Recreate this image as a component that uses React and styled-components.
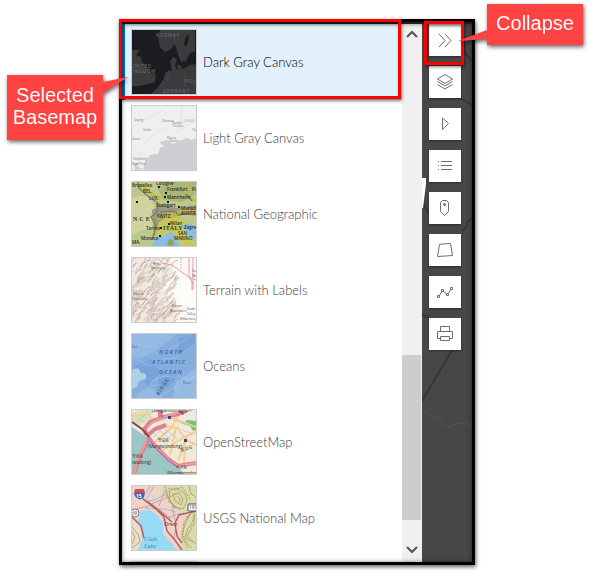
import * as React from 'react';
import styled, {createGlobalStyle} from 'styled-components';


const GlobalStyles = createGlobalStyle`
  *, *::before, *::after {
    box-sizing: border-box;
  }

  body {
    margin: 0;
    background-color: #fff;
    font-family: Lato, "Noto Sans CJK KR", sans-serif;
  }
`;

const Stage = styled.main`
  position: relative;
  height: 100vh;
  padding: 19px 114px 9px 119px;
  overflow: hidden;
`;

const Viewer = styled.section`
  position: relative;
  display: flex;
  height: 100%;
  border: 3px solid #000;
  box-shadow: 1px 2px 4px rgba(0, 0, 0, 0.6);

  &::after {
    content: '';
    position: absolute;
    inset: 0;
    border-top: 2px solid #202020;
    box-shadow: inset 0 0 4px rgba(0, 0, 0, 0.5);
    pointer-events: none;
  }
`;

const BasemapList = styled.ul`
  flex: 1;
  min-width: 0;
  margin: 0;
  padding: 2px 0 0;
  overflow: hidden;
  list-style: none;
`;

const BasemapButton = styled.button`
  display: flex;
  align-items: center;
  gap: 6px;
  width: 100%;
  height: 76px;
  padding: 0 6px;
  border: none;
  border-left: 3px solid ${({$selected}) => ($selected ? '#0079c1' : 'transparent')};
  background-color: ${({$selected}) => ($selected ? '#e2f1fb' : '#fff')};
  color: ${({$selected}) => ($selected ? '#000' : '#404040')};
  font-family: inherit;
  font-size: 13px;
  font-weight: 300;
  text-align: left;
  cursor: pointer;
`;

const Thumbnail = styled.svg`
  flex: none;
  width: 66px;
  height: 66px;
  border: 1px solid #ccc;
  font-family: "Open Sans", "Noto Sans CJK KR", sans-serif;
  font-weight: 400;
`;

const Scrollbar = styled.div`
  display: flex;
  flex-direction: column;
  width: 20px;
  padding-right: 1px;
  background-color: #f0f0f0;
`;

const ScrollButton = styled.button`
  display: grid;
  place-items: center;
  height: 24px;
  padding: 0;
  border: none;
  background: none;
`;

const ScrollTrack = styled.div`
  display: flex;
  flex: 1;
  flex-direction: column;
`;

const ScrollSpace = styled.div`
  flex: ${({$size}) => $size};
`;

const ScrollThumb = styled.div`
  flex: 165;
  background-color: #cdcdcd;
`;

const Toolbar = styled.nav`
  position: relative;
  display: flex;
  flex-direction: column;
  gap: 10px;
  width: 50px;
  padding: 2px 7px;
  background-color: #474749;
`;

const Roads = styled.svg`
  position: absolute;
  top: 0;
  left: 0;
  width: 50px;
  height: 540px;
`;

const ToolButton = styled.button`
  position: relative;
  width: 32px;
  height: 32px;
  padding: 0;
  border: none;
  background-color: #fff;
  box-shadow: 0 1px 2px rgba(0, 0, 0, 0.4);
  cursor: pointer;

  svg {
    display: block;
    fill: none;
    stroke: #6e6e6e;
  }
`;

const Highlight = styled.div`
  position: absolute;
  z-index: 1;
  border: 3px solid #f00;
  box-shadow: 1px 2px 3px rgba(0, 0, 0, 0.5), inset 1px 2px 3px rgba(0, 0, 0, 0.4);
  pointer-events: none;
`;

const RowHighlight = styled(Highlight)`
  top: -3px;
  right: 71px;
  left: -3px;
  height: 80px;
`;

const ButtonHighlight = styled(Highlight)`
  top: -1px;
  right: 8px;
  width: 40px;
  height: 44px;
`;

const Callout = styled.div`
  position: absolute;
  z-index: 2;
  width: 96px;
  color: #fff;
  background-color: #ff4242;
  font-family: "Liberation Sans", Arial, sans-serif;
  font-size: 20px;
  line-height: 22px;
  text-align: center;
  filter: drop-shadow(1px 2px 2px rgba(0, 0, 0, 0.6));
`;

const BasemapCallout = styled(Callout)`
  top: 75px;
  left: 7px;
  padding: 9px 0 12px;
`;

const CollapseCallout = styled(Callout)`
  top: 4px;
  right: 6px;
  padding: 8px 0 11px;
`;

const BasemapPointer = styled.svg`
  position: absolute;
  top: 0;
  left: 95px;
  width: 28px;
  height: 24px;
`;

const CollapsePointer = styled.svg`
  position: absolute;
  top: 24px;
  right: 95px;
  width: 30px;
  height: 16px;
`;


const DarkGrayMap = () => (
    <>
        <path fill="#1c1c20" d="M0 0h64v64H0z"/>
        <g fill="#3b3b3d">
            <path d="M28 0 26 7l2 10 5 5 6-3 4-5 3 10 3 8 5-1 4-8 5-2V0z"/>
            <path d="M0 20h8l-4 5 5 2 1 5 7 7 2 4 5 1-1 8-6 2-10 2H0z"/>
            <path d="M19 64l7-7 5-7 3-8 6-2-2-8 3-5 4 2-2 6 2 5 8-2 7-4 4 1v29z"/>
            <path d="M45 35h4l1 4-4 1z"/>
        </g>
        <path fill="#1c1c20" d="M53 9l3-5 1 6-3 7-2-2zM0 59l13-2 1 2-9 5H0z"/>
        <path fill="none" stroke="#505053" strokeWidth=".6" d="M42 3l1 12M37 40l-2 12-7 4M52 43l1 13 7 5"/>
        <g fill="#77777a" fontSize="4.5" letterSpacing=".8">
            <text x="24" y="7">NORWAY</text>
            <text x="-1" y="38">UNITED</text>
            <text x="-3" y="43">KINGDOM</text>
            <text x="53" y="53">POL</text>
            <text x="31" y="63">GERMANY</text>
        </g>
    </>
);

const LightGrayMap = () => (
    <>
        <path fill="#efeff0" d="M0 0h64v64H0z"/>
        <path fill="#cfced3" d="M11 64l2-8 5-7 8-1 2-6 4-2-5-4 8-2 6 4 9-4 5-2 4 2 5-2v32z"/>
        <path fill="#cfced3" d="M2 58l5-2-1 5 5 2-8 1z"/>
        <path fill="none" stroke="#dedee0" strokeWidth=".7" d="M0 21l15-8 16-9M14 35l9-7 13-9M50 0l-3 25-5 5M0 42l8 5 6 5M50 23l14-9M0 51l14 1"/>
        <g fill="#77777a" fontSize="3">
            <text x="2" y="15">Qujing</text>
            <text x="11" y="25">Guilin</text>
            <text x="30" y="16">Shantou</text>
            <text x="40" y="18">Xiamen</text>
            <text x="41" y="21">Fuzhou</text>
            <text x="35" y="33">Macao</text>
            <text x="37" y="36">Zhuhai</text>
            <text x="0" y="34">Hanoi</text>
            <text x="1" y="54">Haiphong</text>
            <text x="0" y="59">Nam Dinh</text>
            <text x="60" y="25">Tai</text>
            <text x="51" y="16" fill="#b6b6b9">TAIWAN</text>
        </g>
    </>
);

const NationalGeographicMap = () => (
    <>
        <path fill="#bcc88c" d="M0 0h64v64H0z"/>
        <path fill="#d0d3a0" d="M0 16l15-3 8 12-3 20-20 7z"/>
        <path fill="#a9b678" d="M25 5l14-5h25v12l-14 8-19-2z"/>
        <path fill="#9a9c80" d="M20 28l10-6 15 4 19-3v11l-13-2-15 6-6 12-8 3z"/>
        <path fill="#c8c658" d="M27 40l8-6 14 1 7 6-9 2 9 13 8 5v3H52L42 51l-8-2-6 5-5-3z"/>
        <path fill="#8bbce2" d="M20 64l4-9 8-1 6-5 6 6 4 9zM50 44l7-3 7 4v12l-6-2z"/>
        <path fill="#91a05d" d="M35 63l2-6 4 1 1 6z"/>
        <path
            fill="none"
            stroke="#cdbb30"
            strokeWidth="3"
            opacity=".8"
            d="M8 3l6 4 8 7 7 2M25 37l7-4 12-1 7-4 13 2M54 0l1 13 9 7"
        />
        <path fill="none" stroke="#827f72" strokeWidth="1.5" d="M6 0l1 6 10 9 9 6-1 9-6 5 5 8-3 13M28 30l14-1 5 4 12-2M54 12l6 7"/>
        <g fill="#2a2a28" fontSize="4.5" fontWeight="600">
            <text x="0" y="5">Bruxelles</text>
            <text x="24" y="3">Cologne</text>
            <text x="35" y="9">Frankfurt</text>
            <text x="35" y="17">Mannheim</text>
            <text x="24" y="25">Stuttgart</text>
            <text x="49" y="28">Munich</text>
            <text x="49" y="33">AUSTRIA</text>
            <text x="25" y="36">SWITZ.</text>
            <text x="38" y="43">Milan</text>
            <text x="14" y="48">Torino</text>
            <text x="52" y="47">Zagreb</text>
            <text x="46" y="53">SAN</text>
            <text x="42" y="58">MARINO</text>
            <text x="9" y="58">Monaco</text>
            <text x="11" y="11">BEL.</text>
            <text x="17" y="18">LUX.</text>
            <text x="0" y="62">MA.</text>
            <text x="60" y="9">Po</text>
        </g>
        <g fill="#353929" fontFamily="Liberation Serif" fontSize="6" fontWeight="bold">
            <text x="1" y="39" letterSpacing="2">NCE</text>
            <text x="31" y="48" letterSpacing=".4">ITALY</text>
        </g>
        <path fill="#171717" d="M26 4h2v2h-2zM33 10h2v2h-2zM32 14h2v2h-2zM35 19h2v2h-2zM46 24h2v2h-2zM36 41h2v2h-2zM28 45h2v2h-2zM27 53h2v2h-2zM4 19h2v2H4z"/>
    </>
);

const noise = (n) => {
    const value = Math.sin(n * 12.9898) * 43758.5453;
    return value - Math.floor(value);
};

// short curved ridges that lean to the upper right
const slopes = Array.from({length: 190}, (_, i) => ({
    x: noise(i + 1) * 46 - 3,
    y: noise(i + 301) * 68,
    length: 2 + noise(i + 601) * 5,
    lean: 0.6 + noise(i + 901) * 0.8,
    light: noise(i + 1201) > 0.4,
}));

const TerrainMap = () => (
    <>
        <path fill="#fbf8f5" d="M0 0h64v64H0z"/>
        <path fill="#f1e9e2" d="M0 0h24l18 8-3 12-8 8 4 12 15 12-8 12H0z"/>
        {slopes.map(({x, y, length, lean, light}, i) => (
            <path
                key={i}
                fill="none"
                stroke={light ? '#d9cabe' : '#b09a8c'}
                strokeWidth={light ? 1.6 : 0.9}
                strokeLinecap="round"
                opacity=".8"
                d={`M${x} ${y}q${length * 0.2} ${-length * 0.8} ${length * lean} ${-length}`}
            />
        ))}
        <path fill="#fdfcfa" opacity=".9" d="M42 8l22 12v30L45 47l-4-14 6-12z"/>
        <path
            fill="none"
            stroke="#e99b9f"
            d="M26 0l4 5 10 2 8 6 9 6 5 7M57 0v18l3 5v9M61 0v32M57 19l7 3"
        />
        <path fill="none" stroke="#bdacd4" strokeWidth=".8" strokeDasharray="2 1" d="M0 33h27V23M24 33v10M22 43v21M49 0v11"/>
        <g fill="#56504e" fontSize="3">
            <text x="21" y="7">White</text>
            <text x="19" y="11">Mountain</text>
            <text x="1" y="37">Mineral</text>
            <text x="0" y="42">Mountains</text>
            <text x="40" y="49">Tucson</text>
            <text x="38" y="54">Reservation</text>
            <text x="55" y="52">South</text>
            <text x="55" y="57">Valley</text>
            <text x="48" y="62">Wilderness</text>
            <text x="60" y="14">Ca</text>
            <text x="60" y="19">EA</text>
        </g>
    </>
);

const OceansMap = () => (
    <>
        <path fill="#85aedd" d="M0 0h64v64H0z"/>
        <path fill="#94b9e2" d="M0 0h45L25 16 8 25 0 22zM44 48l20-14v30H40zM6 59l14-5 11 10H3z"/>
        <path fill="#79a4d7" d="M47 4L63 0v11L46 22zM2 32l17-7 9 14-13 13zM27 44l18-4-4 10-17 9z"/>
        <path fill="#add2e6" d="M0 36l6-2 3 5 5 1v5l-7 2-2 6-5 2z"/>
        <path
            fill="none"
            stroke="#b1cff0"
            opacity=".5"
            d="M0 8l15 5 8-3L31 0M22 20l14-3L57 3M29 25l14-1 20-14M8 58l17-8 9 4M28 62l14-8 22-12M46 41l7 4 11-3M41 49l4 9 7 6M3 25l15 7 9-5M20 47l12-5 14 2"
        />
        <g fill="#245fa5" fontSize="5.5" fontStyle="italic" fontWeight="600" letterSpacing="1.3">
            <text x="27" y="20">NORTH</text>
            <text x="20" y="30">ATLANTIC</text>
            <text x="27" y="40">OCEAN</text>
        </g>
        <g fill="#35567a" fontSize="4">
            <text x="0" y="14">for</text>
            <text x="51" y="50">Elev.</text>
            <text fontSize="5" fontWeight="600" letterSpacing="1" transform="translate(27 62) rotate(-58)">RIDGE</text>
        </g>
    </>
);

const OpenStreetMap = () => (
    <>
        <path fill="#f1e9db" d="M0 0h64v64H0z"/>
        <path fill="#9cc5c5" d="M0 17l15 10 7 9 13 12 11 9 7 7H0z"/>
        <path fill="#d3e5bd" d="M0 3l8-3h13l-4 9-9 7-8-4z"/>
        <path fill="#73c76b" d="M51 14l4-4 9 1v9l-3 1-3-5z"/>
        <path
            fill="none"
            stroke="#f8cd90"
            strokeWidth="2"
            d="M28 16l18 2 7 11 11 6M20 35l19-17L49 1M44 18l-6 27M54 28l-8 23M28 42l25-15 11-5M0 6l16-2 5 6M36 5l9 5 19 7M47 0l-5 10M53 29l-1 25"
        />
        <path
            fill="none"
            stroke="#bdb8b4"
            strokeWidth=".6"
            d="M25 18l15 13M22 23l15 13M29 16l16 13M23 31l17-13M30 34l14-13M21 27l15-13M49 13l14 3M50 20l12 4M36 8l18 6M2 14L17 1M5 8l8 5"
        />
        <path
            fill="none"
            stroke="#dc7f8f"
            strokeWidth="4"
            d="M16 27l7 9 13 13 10 7 18-3M14 25l-1-7 5-6 14-5 14-3 9-4M17 28L9 44 2 64M15 26l8-7 11-4M28 0v9"
        />
        <path fill="none" stroke="#ec9da2" strokeWidth="2" d="M16 27l7 9 13 13 10 7 18-3M15 18l6-6 15-6 18-6M15 29L6 49 2 64"/>
        <path fill="none" stroke="#854a50" strokeWidth="2" d="M0 12l10 7 7 8"/>
        <path fill="none" stroke="#6270bb" strokeWidth=".8" d="M17 28l5 8 13 13 11 8M30 0v8"/>
        <path fill="#4d3f78" d="M36 6h3v3h-3zM52 29h3v3h-3z"/>
        <g fill="#2f3030" fontSize="4.5">
            <text x="20" y="2">(Sangamdong)</text>
            <text x="26" y="32" fontSize="4">망원동</text>
            <text x="16" y="38">(Mangwondong)</text>
            <text x="0" y="48" fontSize="4">양화동</text>
            <text x="-3" y="54">(hwadong)</text>
            <text x="44" y="59" fontSize="4">서교동</text>
            <text x="35" y="65">(Mangwondong)</text>
            <text transform="translate(49 42) rotate(-18)">동교로</text>
            <text transform="translate(49 5) rotate(-25)">월드컵</text>
        </g>
    </>
);

const UsgsMap = () => (
    <>
        <path fill="#f0d3c8" d="M0 0h64v64H0z"/>
        <path fill="#d9dcaa" d="M28 0h36v64H50l-2-18 8-18L42 17l-8-3z"/>
        <path fill="#e9decd" d="M0 29l9 10 3 13-8 12H0z"/>
        <path fill="#98daf5" d="M9 25l9-1 7 5 6 7v11l7 9 7 8H6l4-10-1-11-3-7z"/>
        <path
            fill="none"
            stroke="#c19a68"
            strokeWidth=".9"
            d="M38 4l7-2 8 6 2 7-4 8-8-2-6-8zM41 8l6-1 4 6-2 6-6-4zM45 10l3 3-1 4M33 0l3 11 7 12M57 0l2 8 5 3M54 32l8-7v14l-6 3-3 10 8 4M58 28l-5 10-3 13 6 11M60 42l-5 8 9 8M0 41l6 7 2 8-8 6M0 46l3 5-3 7"
        />
        <path
            fill="none"
            stroke="#84ab65"
            strokeDasharray="2 1"
            d="M36 2l7 2 7-3 8 12M34 9l7 10 8 5M60 26l-8 10-2 12 5 9 5 5M63 29l-5 12M36 15l12 9"
        />
        <path fill="none" stroke="#d6a09c" d="M0 24l21-5 18 13M18 0l-8 14M33 4l-6 16M40 20l4 18-2 16M0 8l19 10L47 7"/>
        <path fill="none" stroke="#7fb9d8" strokeWidth=".8" d="M22 0l-9 16 12-3L38 5M31 35l11-6 10-2M13 22l20 1 11 3"/>
        <path
            fill="none"
            stroke="#b56064"
            strokeWidth="1.5"
            d="M9 11l16 13 7 7 3 14 7 8 8 11M15 15l16 13 9 8M43 38l2 12 5 7M43 37l4-8 17-4M0 31l9 9 3 12"
        />
        <path fill="#3a63ae" stroke="#fff" strokeWidth=".7" d="M2 5h11c1 6-2 8-5 9-4-1-7-4-6-9z"/>
        <path fill="#c9505a" d="M3 3h9l1 4H2z"/>
        <text x="4" y="12" fill="#fff" fontSize="5" fontWeight="bold">15</text>
        <rect x="56" y="18" width="12" height="7" rx="1" fill="#fff" stroke="#4d4d4d"/>
        <circle cx="3" cy="27" r="4" fill="#fff" stroke="#777"/>
        <g fill="#35383a" fontSize="4.5">
            <text x="57" y="23">189</text>
            <text x="0" y="29">68</text>
            <text x="32" y="40" fontSize="5">Orem</text>
        </g>
        <g fill="#4189b1" fontFamily="Liberation Serif" fontSize="6.5" fontStyle="italic">
            <text x="12" y="55">Utah</text>
            <text x="12" y="62">Lake</text>
        </g>
    </>
);

const EmptyMap = () => <path fill="#e4e4e4" d="M0 0h64v64H0z"/>;

const basemaps = [
    {name: 'Dark Gray Canvas', Map: DarkGrayMap},
    {name: 'Light Gray Canvas', Map: LightGrayMap},
    {name: 'National Geographic', Map: NationalGeographicMap},
    {name: 'Terrain with Labels', Map: TerrainMap},
    {name: 'Oceans', Map: OceansMap},
    {name: 'OpenStreetMap', Map: OpenStreetMap},
    {name: 'USGS National Map', Map: UsgsMap},
    {name: '', Map: EmptyMap},
];

const tools = [
    {name: 'Collapse', icon: <path d="m10 10 6 6.5-6 6.5M16 10l6 6.5-6 6.5"/>},
    {name: 'Layers', icon: <path d="m8.5 13 7.5-4.5 7.5 4.5-7.5 4.5zM8.5 15.5 16 20l7.5-4.5M8.5 18.5 16 23l7.5-4.5"/>},
    {name: 'Play', icon: <path d="M13.5 10v11.5l6-6z"/>},
    {name: 'Legend', icon: <path d="M9 11.5h1M12 11.5h11M9 15.5h1M12 15.5h11M9 19.5h1M12 19.5h11"/>},
    {
        name: 'Places',
        icon: (
            <>
                <path d="M13.5 8.5h4l2 2v9l-4 4-4-4v-9z"/>
                <circle cx="15.5" cy="12.5" r="1" fill="#6e6e6e"/>
            </>
        ),
    },
    {name: 'Area', icon: <path d="m10.5 10.5 3-.5 8-.5 2 12-7 .5-8 .5z"/>},
    {
        name: 'Elevation profile',
        icon: (
            <>
                <path d="m10 20 3.5-5.5 5 4 4-6"/>
                <path fill="#fff" d="M8.5 19.5h2v2h-2zM12.5 13.5h2v2h-2zM17.5 17.5h2v2h-2zM21.5 11.5h2v2h-2z"/>
            </>
        ),
    },
    {name: 'Print', icon: <path d="M11.5 13.5v-5h9v5M11.5 20.5h-3v-7h15v7h-3M11.5 18.5h9v4h-9z"/>},
];

const ScrollArrow = ({d}) => (
    <svg width="12" height="8" viewBox="0 0 12 8" fill="none" stroke="#555" strokeWidth="2">
        <path d={d}/>
    </svg>
);

const App = () => {
    const [selected, setSelected] = React.useState('Dark Gray Canvas');

    return (
        <>
            <GlobalStyles/>
            <Stage>
                <Viewer>
                    <BasemapList>
                        {basemaps.map(({name, Map}) => (
                            <li key={name}>
                                <BasemapButton
                                    type="button"
                                    $selected={name === selected}
                                    aria-pressed={name === selected}
                                    onClick={() => setSelected(name)}
                                >
                                    <Thumbnail viewBox="0 0 64 64" aria-hidden="true">
                                        <Map/>
                                    </Thumbnail>
                                    <span>{name}</span>
                                </BasemapButton>
                            </li>
                        ))}
                    </BasemapList>
                    <Scrollbar>
                        <ScrollButton type="button" aria-label="Scroll up">
                            <ScrollArrow d="m1 7 5-5 5 5"/>
                        </ScrollButton>
                        <ScrollTrack>
                            <ScrollSpace $size={309}/>
                            <ScrollThumb/>
                            <ScrollSpace $size={18}/>
                        </ScrollTrack>
                        <ScrollButton type="button" aria-label="Scroll down">
                            <ScrollArrow d="m1 1 5 5 5-5"/>
                        </ScrollButton>
                    </Scrollbar>
                    <Toolbar aria-label="Map tools">
                        <Roads viewBox="0 0 50 540" fill="none" aria-hidden="true">
                            <path stroke="#353537" strokeWidth="2" d="M42 20v10l8 9M34 74l16 9M0 179l10 18M40 209l4-3 2-7 4-2M0 292l8 5M30 328 0 379"/>
                            <path stroke="#535355" d="M0 390h6l6 5 5 1 5 8 5 1 6-3 9-1 8 2M0 163l7 8M0 31l5 4"/>
                            <path fill="#fff" d="M0 156h4v6l-1 8-1 8-1 8H0z"/>
                        </Roads>
                        {tools.map(({name, icon}) => (
                            <ToolButton key={name} type="button" aria-label={name}>
                                <svg width="32" height="32" viewBox="0 0 32 32" aria-hidden="true">{icon}</svg>
                            </ToolButton>
                        ))}
                    </Toolbar>
                    <RowHighlight/>
                    <ButtonHighlight/>
                </Viewer>
                <BasemapCallout>
                    <BasemapPointer viewBox="0 0 28 24" aria-hidden="true">
                        <path fill="#ff4242" d="M0 7h1l25-5L1 18H0z"/>
                    </BasemapPointer>
                    Selected Basemap
                </BasemapCallout>
                <CollapseCallout>
                    <CollapsePointer viewBox="0 0 30 16" aria-hidden="true">
                        <path fill="#ff4242" d="M30 2h-1L0 13l29-2h1z"/>
                    </CollapsePointer>
                    Collapse
                </CollapseCallout>
            </Stage>
        </>
    );
};


export default App;
